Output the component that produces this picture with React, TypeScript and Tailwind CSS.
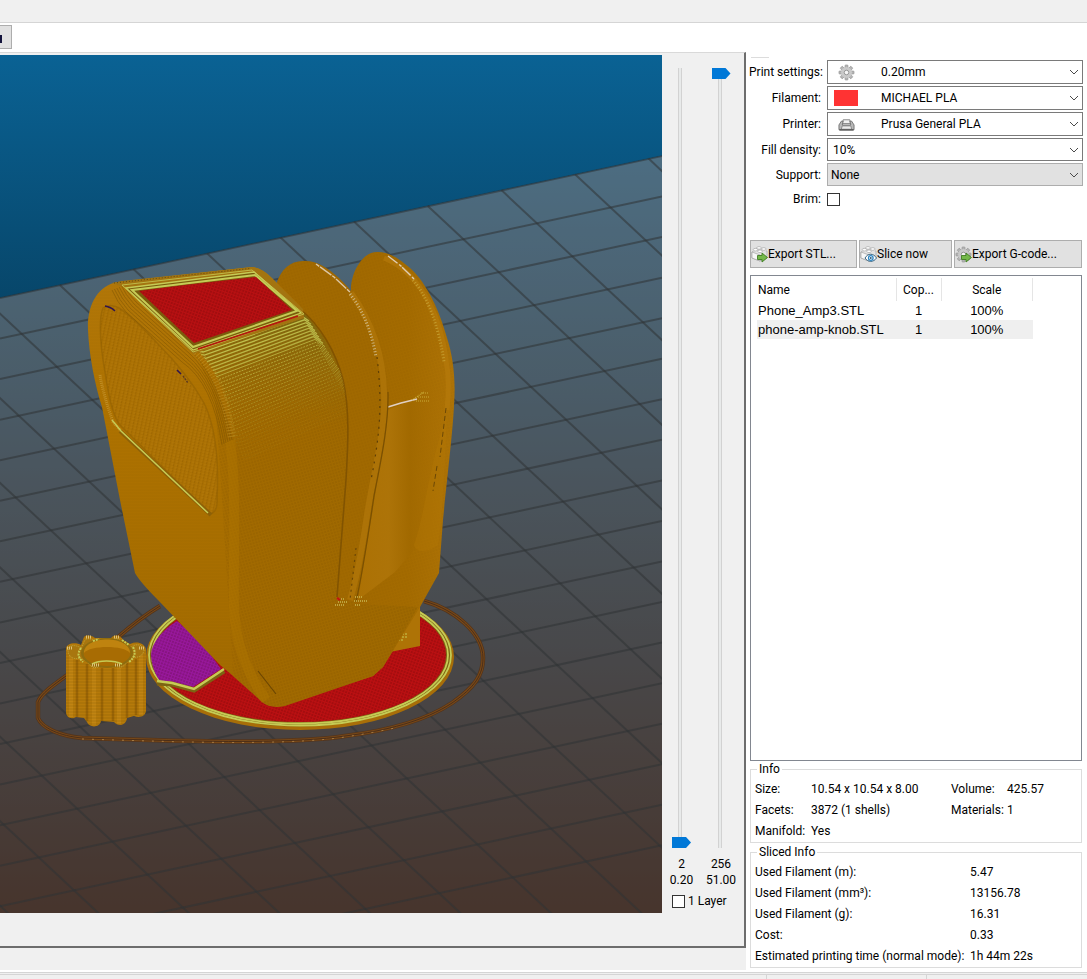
import { useState } from "react";
import type { ReactNode } from "react";

const LIME = "#c6cb55";

const rowLines = Array.from({ length: 18 }, (_, i) => i);
const columnLines = Array.from({ length: 28 }, (_, i) => i - 24);
const ribs = Array.from({ length: 34 }, (_, i) => i);
const shoulderLines = Array.from({ length: 6 }, (_, i) => i);

const slicedInfo = [
  { label: "Used Filament (m):", value: "5.47" },
  { label: "Used Filament (mm³):", value: "13156.78" },
  { label: "Used Filament (g):", value: "16.31" },
  { label: "Cost:", value: "0.33" },
  { label: "Estimated printing time (normal mode):", value: "1h 44m 22s" },
];

const objects = [
  { name: "Phone_Amp3.STL", copies: 1, scale: "100%" },
  { name: "phone-amp-knob.STL", copies: 1, scale: "100%" },
];

function Chevron() {
  return (
    <svg viewBox="0 0 10 6" className="pointer-events-none absolute right-1 top-1/2 w-[10px] -translate-y-1/2" fill="none" stroke="#4a4a4a">
      <path d="M1 1l4 4 4-4" />
    </svg>
  );
}

function GearIcon({ className = "" }: { className?: string }) {
  return (
    <svg viewBox="0 0 18 18" className={className}>
      <g fill="#b4b4b4" stroke="#8d8d8d" strokeWidth=".6">
        {[0, 45, 90, 135].map((a) => (
          <rect key={a} x="7.4" y="1" width="3.2" height="16" rx=".8" transform={`rotate(${a} 9 9)`} />
        ))}
      </g>
      <circle cx="9" cy="9" r="5.8" fill="#c9c9c9" />
      <circle cx="9" cy="9" r="2.4" fill="#f6f6f6" stroke="#8a8a8a" strokeWidth=".9" />
    </svg>
  );
}

function PrinterIcon({ className = "" }: { className?: string }) {
  return (
    <svg viewBox="0 0 18 18" className={className}>
      <path d="M5.500 4h7l1 4h-9z" fill="#f1f1f1" stroke="#777" strokeWidth=".9" />
      <path d="M3.500 5.500h2l-1 4h9l-1-4h2l2.500 4v5H1v-5z" fill="#b9b9b9" stroke="#6a6a6a" strokeWidth=".9" />
      <path d="M4.500 10.500h9l1 3.500h-11z" fill="#ececec" stroke="#777" strokeWidth=".8" />
      <path d="M1.500 14h15v1.500h-15z" fill="#555" />
    </svg>
  );
}

function GreenArrow() {
  return <path d="M6.500 9.500h4.500V7L16.500 11.500 11 16v-2.500H6.500z" fill="#74b84a" stroke="#3f7d22" strokeWidth=".9" strokeLinejoin="round" />;
}

function Brick() {
  return (
    <g stroke="#999" strokeWidth=".6">
      <path d="M1 6l7-3 8 2v7l-7 3-8-3z" fill="#e2e2e2" />
      <path d="M1 6l8 3v6l-8-3z" fill="#f7f7f7" />
      <path d="M2.200 3.500h4.600v2H2.200zM6.700 5h4.600v2H6.700zM10.500 2.700h4.600v2h-4.600zM5.700 1.500h4.600v2H5.700z" fill="#efefef" stroke="none" />
      <ellipse cx="4.500" cy="3.700" rx="2.300" ry="1.300" fill="#fff" />
      <ellipse cx="8" cy="1.900" rx="2.300" ry="1.300" fill="#fff" />
      <ellipse cx="12.800" cy="3" rx="2.300" ry="1.300" fill="#fff" />
      <ellipse cx="9" cy="5.300" rx="2.300" ry="1.300" fill="#fff" />
    </g>
  );
}

function ExportStlIcon() {
  return (
    <svg viewBox="0 0 17 17" className="size-[17px] shrink-0">
      <Brick />
      <GreenArrow />
    </svg>
  );
}

function SliceIcon() {
  return (
    <svg viewBox="0 0 17 17" className="size-[17px] shrink-0">
      <Brick />
      <path d="M5 12c3-5 8.500-5 11.500 0-3 4.500-8.500 4.500-11.500 0z" fill="#fff" stroke="#33617f" />
      <circle cx="10.800" cy="12" r="2.300" fill="#fff" stroke="#2b86c4" strokeWidth="1.300" />
      <circle cx="10.800" cy="12" r=".9" fill="#1e4f74" />
    </svg>
  );
}

function ExportGcodeIcon() {
  return (
    <span className="relative block size-[17px] shrink-0">
      <GearIcon className="size-[17px]" />
      <svg viewBox="0 0 17 17" className="absolute inset-0 size-[17px]">
        <GreenArrow />
      </svg>
    </span>
  );
}

function Bed() {
  return (
    <g>
      <rect x="0" y="55" width="662" height="858" fill="url(#sky)" />
      <path d="M0 298L662 156V913H0z" fill="#cc9980" opacity=".35" />
      <g clipPath="url(#bedClip)" stroke="#2f3335" strokeOpacity=".55" strokeWidth="2">
        {rowLines.map((i) => (
          <line key={i} x1="0" y1={298 + i * 40.55} x2="662" y2={156 + i * 40.55} />
        ))}
        {columnLines.map((i) => (
          <line
            key={i}
            x1={575 + i * 73.6}
            y1={174.3 - i * 15.8}
            x2={575 + i * 73.6 + 35.2 * 26}
            y2={174.3 - i * 15.8 + 32.9 * 26}
          />
        ))}
      </g>
    </g>
  );
}

function Skirt() {
  const d =
    "M160 606C145 615 131 626 117 638L66 676C52 686 41 694 38 702V718C42 728 60 736 82 738L150 740C215 742 300 743 345 736C385 731 425 721 452 703C475 687 483 675 483 658C483 634 456 610 424 601";
  return (
    <g fill="none">
      <path d={d} stroke="#54341b" strokeWidth="4.500" />
      <path d={d} stroke="#774818" strokeWidth="3" />
      <path d={d} stroke="#4b2e18" strokeWidth="1" />
      <path d="M82 739L150 741C215 743 300 744 345 737C365 734 380 731 395 728" stroke="#a57a42" strokeWidth="1" strokeDasharray="2 8" />
    </g>
  );
}

const purplePatch = "M177 621C158 633 151 646 151 656C152 666 155 675 160 681L193 687L221 669L200 640z";

function Disc() {
  return (
    <g>
      <ellipse cx="300" cy="657" rx="154" ry="73" fill="#a86e08" />
      <ellipse cx="300" cy="655" rx="152" ry="71.500" fill="#7c6412" />
      <ellipse cx="300" cy="655" rx="151" ry="70.500" fill="none" stroke={LIME} strokeWidth="1.800" />
      <ellipse cx="300" cy="655" rx="148" ry="68.500" fill="none" stroke={LIME} strokeWidth="1.800" />
      <ellipse cx="300" cy="655" rx="146" ry="67" fill="#bb1012" />
      <ellipse cx="300" cy="655" rx="146" ry="67" fill="url(#weave)" />
      <path d={purplePatch} fill="#98189c" />
      <path d={purplePatch} fill="url(#weave)" />
      <path d="M157 683L172 684L194 690L224 671" fill="none" stroke="#7c6412" strokeWidth="5" />
      <path d="M157 681L172 683L194 689L224 669" fill="none" stroke={LIME} strokeWidth="2.500" />
    </g>
  );
}

const knobShape =
  "M66 649C66 643 76 642 81 645L84 637C87 634 93 636 95 638H111C114 634 121 635 123 640L130 644C137 641 144 643 146 649V711C145 717 139 718 134 716L127 718C126 726 118 727 114 722L101 721C100 728 89 728 87 722L84 718L76 717C71 720 66 717 66 712z";

function Knob() {
  return (
    <g>
      <path d={knobShape} fill="#b67a0a" />
      <path d="M77 660V717M87 664V721M102 668V721M113 668V721M127 663V718M136 659V715" stroke="#8a5804" strokeWidth="2.500" opacity=".6" />
      <path d="M71 654V717M94 668V725M119 668V724M141 654V715" stroke="#c98b18" strokeWidth="4" opacity=".6" />
      <path d={knobShape} fill="url(#layers)" />
      <path
        d="M68 650C68 644 77 645 81 648L85 640C88 637 93 640 95 641H111C115 637 120 639 122 643L131 647C137 643 143 645 144 650C143 656 138 658 133 657L127 661C125 668 117 669 113 664H101C98 669 91 669 88 662L80 658C74 660 68 657 68 650z"
        fill="#a8760f"
        stroke="#bfa63a"
        strokeWidth="1"
        strokeDasharray="1 1"
      />
      <ellipse cx="107" cy="653" rx="26" ry="15" fill="#8f6c0e" />
      <ellipse cx="107" cy="653" rx="23.500" ry="13" fill="#a86c03" />
      <path d="M84 653C84 635 130 635 130 653C124 645 90 645 84 653z" fill="#bf830f" />
      <path d="M92 664C99 660 114 660 122 664" fill="none" stroke={LIME} strokeWidth="1.600" />
      <path d="M81 648C77 654 78 657 83 662M133 647C136 653 135 657 129 662M93 641L99 639M122 640L129 645" fill="none" stroke={LIME} strokeWidth="2" strokeDasharray="2 1" />
      <path d="M86 637h6M114 637h6M67 648h6M139 648h6M92 665h7M115 665h6" stroke="#dcc27a" strokeWidth="3" strokeDasharray="1 1" />
    </g>
  );
}

function Phone() {
  const rear =
    "M351 292C350 274 362 251 378 252C388 252 397 257 410 268C427 283 440 312 447 338C453 356 456 380 454 405C453 430 447 480 443 520L439 573L420 607L383 667L373 676L330 690L300 600L340 500z";
  const fin =
    "M277 282C281 270 290 261 303 261C316 260 327 267 339 278C352 290 362 305 370 321C380 340 387 365 388 392C389 425 380 465 374 496C369 530 362 575 356 602L330 620L290 400z";
  const front =
    "M193 346L300 310C318 325 334 350 342 378C349 410 348 445 346 480L337 597L358 604L400 606L418 607L383 667L373 676L285 706Q270 709 262 702L233 676L222 500L215 400z";
  const left =
    "M88 330C87 305 98 285 118 282L252 267Q262 268 272 278L300 306L193 348C212 366 226 388 232 425C240 470 243 600 238 680L220 665L158 600Q140 582 135 573L120 500L102 407C95 385 89 355 88 330z";
  const windowPath =
    "M103 308C98 320 101 350 105 372C109 398 112 412 119 424L210 514Q218 512 217 498C219 460 216 428 204 403C194 385 176 362 158 344C144 329 130 315 119 308Q110 303 103 308z";
  return (
    <g>
      <path d="M385 600L420 596V646L390 652z" fill="#ae7306" />
      <path d="M399 637h8M402 634h6M398 640h6" stroke={LIME} strokeWidth="1" strokeDasharray="2 1" />

      <path d={rear} fill="url(#rearFill)" />
      <path d={rear} fill="url(#dots)" opacity=".3" />
      <path d="M387 410C405 404 420 398 430 384L445 400L440 520L414 550L395 572L358 600L376 490z" fill="url(#pillarFill)" />
      <path d="M447 415C445 470 442 520 438 545C430 552 416 554 414 545C426 510 430 460 447 415z" fill="#b47907" opacity=".35" />
      <path d="M384 258C425 275 442 325 446 360C450 380 448 400 447 410" fill="none" stroke="#b87c0c" strokeWidth="5" opacity=".6" />
      <path d="M413 280C430 300 439 330 444 362" fill="none" stroke="#c8a436" strokeWidth="3" strokeDasharray="1 2" opacity=".8" />
      <path d="M388 256L401 266L414 279" fill="none" stroke="#e0cdb4" strokeWidth="1.400" strokeDasharray="12 2 3 1" />
      <path d="M388 407L401 403L417 399" fill="none" stroke="#e0d0c4" strokeWidth="1.600" />
      <path d="M412 400L424 392M416 401H430M418 397H430M421 393H429" stroke="#c9ac38" strokeWidth="1.200" strokeDasharray="1 1" />
      <path d="M446 408L440 457M437 466L433 491" stroke="#6c4805" strokeWidth="1" strokeDasharray="5 3" />

      <path d={fin} fill="#a16900" />
      <path d={fin} fill="url(#dots)" opacity=".35" />
      <path d="M351 293C369 318 383 350 384 392C386 428 374 470 367 515C362 550 356 580 350 600" fill="none" stroke="#b2770a" strokeWidth="6" opacity=".7" />
      <path d="M388 392C389 425 380 465 374 496C369 530 362 575 356 602" fill="none" stroke="#7a5002" strokeWidth="1.200" />
      <path d="M316 264L334 277L350 292" fill="none" stroke="#dcc6a4" strokeWidth="1.400" strokeDasharray="4 1 14 1" />
      <path d="M350 294C365 313 372 335 376 357" fill="none" stroke="#cdb680" strokeWidth="3" strokeDasharray="1 2" />
      <path d="M377 357C382 400 381 430 371 480" fill="none" stroke="#5f3f06" strokeWidth="1.200" strokeDasharray="2 5" />
      <path d="M356 548L350 600" stroke="#6c4705" strokeWidth="1.200" strokeDasharray="2 4" />

      <path d={left} fill="url(#leftFill)" />
      <path d={left} fill="url(#layers)" opacity=".2" />
      <path d={front} fill="url(#frontFill)" />
      <path d="M193 346L300 310C318 325 334 350 342 378L348 420L234 440C231 405 219 370 193 346z" fill="url(#ribFill)" />
      <path d={front} fill="url(#dots)" opacity=".7" />
      <path d="M300 309C320 325 336 352 343 380C350 410 348 445 346 480L337 597" fill="none" stroke="#7a4f00" strokeWidth="1.600" opacity=".8" />
      <path d="M230 440C237 490 233 560 234 610Q237 660 266 700" fill="none" stroke="#b27700" strokeWidth="10" opacity=".4" />
      <path d="M258 671L276 694" stroke="#6c4600" strokeWidth="1.200" />

      <g fill="none" stroke={LIME} clipPath="url(#frontClip)">
        {ribs.map((i) => (
          <path
            key={i}
            d={`M${194 + i * 1.5} ${350 + i * 3.3}L${203 + i * 1.4} ${352 + i * 3.2}L${303 + i * 1.5} ${317 + i * 2.8}L${309 + i * 2} ${321 + i * 3.2}`}
            strokeWidth={i < 8 ? 1.3 : 1}
            strokeOpacity={Math.max(0.08, 0.9 - i * 0.028)}
            strokeDasharray={i < 9 ? undefined : "2 1"}
          />
        ))}
      </g>

      <path d={windowPath} fill="#aa7003" />
      <path d={windowPath} fill="url(#mesh)" />
      <path d={windowPath} fill="none" stroke="#8d5d02" strokeWidth="1.500" opacity=".5" />
      <path d="M100 375C102 388 107 405 113 422L121 431" fill="none" stroke="#c99a34" strokeWidth="3" strokeDasharray="1 1" opacity=".7" />
      <path d="M120 431L211 515" stroke="#8d6107" strokeWidth="4" />
      <path d="M112 420L121 431L208 513" fill="none" stroke={LIME} strokeWidth="1.500" />
      <path d="M105 306Q111 307 115 311M177 370L181 374" fill="none" stroke="#30144e" strokeWidth="1.600" />
      <path d="M183 376L188 383" stroke="#5e3a20" strokeWidth="1.400" strokeDasharray="2 1" />

      <g fill="none" stroke="#7a5203" strokeWidth=".8" opacity=".6">
        {shoulderLines.map((i) => (
          <path
            key={i}
            d={`M${124 - i * 2.4} ${285 + i}Q${127 - i * 2} ${292 + i * 2} ${136 - i * 2} ${302 + i * 2}L${192 - i * 2} ${352 + i * 2}Q${218 - i} ${378 + i} ${232 - i * 2} ${440 + i}`}
          />
        ))}
      </g>
      <path d="M196 352C213 368 225 392 232 438" fill="none" stroke="#c79a2c" strokeWidth="8" strokeDasharray="1 2" opacity=".5" />

      <path d="M112 283L122 281L252 267Q261 268 269 276L303 309L304 318L193 354L126 288z" fill="#a37410" />
      <path d="M114 283L250 268.500" stroke="#5f4a10" strokeWidth="1" strokeDasharray="1 2" />
      <path d="M122 285L252 270L304 314L193 352z" fill="none" stroke={LIME} strokeWidth="1" opacity=".8" />
      <path d="M126 288L254 272L301 313L193 350z" fill="#7a5c0c" stroke={LIME} strokeWidth="1.300" />
      <path d="M132 290L255 275L297 311L193 347z" fill="none" stroke={LIME} strokeWidth="2" />
      <path d="M139 291L185 285L256 277L292 310L194 343z" fill="#b81012" />
      <path d="M139 291L185 285L256 277L292 310L194 343z" fill="url(#weave)" />
      <path d="M198 349L298 316" stroke="#b3170d" strokeWidth="1.800" />

      <path d="M337 599h8M338 602h10M335 605h9M355 597h8M354 601h13M355 605h5" stroke="#c9b750" strokeWidth="1.500" strokeDasharray="1 1" />
      <path d="M337 598l3 2" stroke="#c0180f" strokeWidth="2.500" />
    </g>
  );
}

function Preview() {
  return (
    <svg
      role="img"
      aria-label="Toolpath preview"
      viewBox="0 55 662 858"
      preserveAspectRatio="xMinYMin slice"
      className="block min-w-0 flex-1"
    >
      <defs>
        <linearGradient id="sky" x1="0" y1="0" x2="0" y2="1">
          <stop offset="0" stopColor="#0a6294" />
          <stop offset="1" stopColor="#000000" />
        </linearGradient>
        <linearGradient id="leftFill" x1="0" y1="0" x2="0" y2="1">
          <stop offset="0" stopColor="#b27709" />
          <stop offset=".35" stopColor="#ae7200" />
          <stop offset="1" stopColor="#a36b00" />
        </linearGradient>
        <linearGradient id="frontFill" x1="0" y1="0" x2="1" y2="0">
          <stop offset="0" stopColor="#b07400" />
          <stop offset=".2" stopColor="#a26a00" />
          <stop offset="1" stopColor="#9f6900" />
        </linearGradient>
        <linearGradient id="rearFill" x1="0" y1="0" x2="1" y2="0">
          <stop offset="0" stopColor="#9f6700" />
          <stop offset=".7" stopColor="#a46b00" />
          <stop offset="1" stopColor="#ae7306" />
        </linearGradient>
        <linearGradient id="pillarFill" x1="0" y1="0" x2="1" y2="0">
          <stop offset="0" stopColor="#ac7104" />
          <stop offset=".35" stopColor="#b0760a" stopOpacity=".8" />
          <stop offset=".6" stopColor="#a16900" stopOpacity=".8" />
          <stop offset="1" stopColor="#ac7104" stopOpacity=".3" />
        </linearGradient>
        <linearGradient id="ribFill" x1="0" y1="0" x2="0" y2="1">
          <stop offset="0" stopColor="#7d6a12" />
          <stop offset="1" stopColor="#a06902" stopOpacity="0" />
        </linearGradient>
        <pattern id="weave" width="3" height="3" patternUnits="userSpaceOnUse" patternTransform="rotate(20)">
          <path d="M0 1h2" stroke="#3a0000" strokeOpacity=".35" />
        </pattern>
        <pattern id="dots" width="3" height="3" patternUnits="userSpaceOnUse" patternTransform="rotate(-16)">
          <path d="M0 1h2" stroke="#4d3100" strokeOpacity=".25" />
        </pattern>
        <pattern id="layers" width="3" height="3" patternUnits="userSpaceOnUse">
          <path d="M0 1h3" stroke="#5d3b00" strokeOpacity=".22" />
        </pattern>
        <pattern id="mesh" width="4" height="3" patternUnits="userSpaceOnUse" patternTransform="rotate(12)">
          <path d="M0 1h2" stroke="#cc9220" strokeOpacity=".28" />
          <path d="M2 2h1" stroke="#5c3a00" strokeOpacity=".28" />
        </pattern>
        <clipPath id="bedClip">
          <path d="M0 297L662 155V913H0z" />
        </clipPath>
        <clipPath id="frontClip">
          <path d="M193 346L303 311C320 325 336 352 343 380C350 410 348 445 346 480L235 470C233 405 219 370 193 346z" />
        </clipPath>
      </defs>
      <Bed />
      <Skirt />
      <Disc />
      <Knob />
      <Phone />
    </svg>
  );
}

function LayerSlider({ label, value, onChange }: { label: string; value: number; onChange: (value: number) => void }) {
  return (
    <input
      type="range"
      aria-label={label}
      min={2}
      max={256}
      value={value}
      onChange={(e) => onChange(Number(e.target.value))}
      className="min-h-0 w-[19px] flex-1 appearance-none bg-[linear-gradient(90deg,#d2d2d2_1px,#e8eaea_1px,#e8eaea_3px,#d2d2d2_3px)] bg-[length:4px_100%] bg-[position:6px_0] bg-no-repeat [direction:rtl] [writing-mode:vertical-lr] [&::-webkit-slider-thumb]:h-[11px] [&::-webkit-slider-thumb]:w-[19px] [&::-webkit-slider-thumb]:appearance-none [&::-webkit-slider-thumb]:bg-[#0078d7] [&::-webkit-slider-thumb]:[clip-path:polygon(0_0,14px_0,100%_50%,14px_100%,0_100%)]"
    />
  );
}

function LayerControls() {
  const [low, setLow] = useState(2);
  const [high, setHigh] = useState(256);

  return (
    <div className="flex w-[82px] shrink-0 flex-col pb-[3px] pt-[13px]">
      <div className="flex min-h-0 flex-1">
        <div className="flex w-[39px] flex-col items-center text-center">
          <LayerSlider label="Lower layer" value={low} onChange={setLow} />
          <output className="mt-2 leading-4">{low}</output>
          <output className="leading-4">{(low * 0.1).toFixed(2)}</output>
        </div>
        <div className="flex w-10 flex-col items-center text-center">
          <LayerSlider label="Upper layer" value={high} onChange={setHigh} />
          <output className="mt-2 leading-4">{high}</output>
          <output className="leading-4">51.00</output>
        </div>
      </div>
      <label className="ml-[10px] mt-1 flex items-center gap-[3px] whitespace-nowrap leading-[18px]">
        <input type="checkbox" className="size-[13px] appearance-none border border-[#333] bg-white checked:bg-[#0078d7]" />
        1 Layer
      </label>
    </div>
  );
}

interface SettingProps {
  id: string;
  label: string;
  value: string;
  icon?: ReactNode;
  className: string;
}

function Setting({ id, label, value, icon, className }: SettingProps) {
  return (
    <>
      <label htmlFor={id} className="whitespace-nowrap text-right">
        {label}
      </label>
      <div className="relative">
        <select id={id} className={`block w-full appearance-none border pr-5 text-black ${className}`}>
          <option>{value}</option>
        </select>
        {icon && <span className="pointer-events-none absolute inset-y-0 left-[7px] flex w-6 items-center justify-center">{icon}</span>}
        <Chevron />
      </div>
    </>
  );
}

function SettingsForm() {
  return (
    <div className="grid grid-cols-[72px_1fr] items-center gap-x-[6px] gap-y-[2px] pl-[2px]">
      <Setting id="print" label="Print settings:" value="0.20mm" icon={<GearIcon className="size-[17px]" />} className="h-6 border-[#7a7a7a] bg-white pl-[53px]" />
      <Setting
        id="filament"
        label="Filament:"
        value="MICHAEL PLA"
        icon={<span className="h-4 w-6 bg-[#ff3333]" />}
        className="h-6 border-[#7a7a7a] bg-white pl-[53px]"
      />
      <Setting id="printer" label="Printer:" value="Prusa General PLA" icon={<PrinterIcon className="size-[17px]" />} className="h-6 border-[#7a7a7a] bg-white pl-[53px]" />
      <Setting id="density" label="Fill density:" value="10%" className="h-[23px] border-[#7a7a7a] bg-white pl-[5px]" />
      <Setting id="support" label="Support:" value="None" className="h-[23px] border-[#adadad] bg-[#e1e1e1] pl-[3px]" />
      <label htmlFor="brim" className="text-right leading-[22px]">
        Brim:
      </label>
      <input id="brim" type="checkbox" className="size-[13px] appearance-none border border-[#333] bg-white checked:bg-[#0078d7]" />
    </div>
  );
}

function ObjectList() {
  return (
    <div className="mt-[7px] flex-1 border border-[#828790] bg-white pl-[6px] pt-[2px]">
      <table className="w-[276px] table-fixed border-collapse">
        <thead>
          <tr className="h-[23px]">
            <th className="w-[139px] border-r border-[#e5e5e5] pl-px text-left font-normal">Name</th>
            <th className="w-[45px] border-r border-[#e5e5e5] text-center font-normal">Cop...</th>
            <th className="border-r border-[#e5e5e5] text-center font-normal">Scale</th>
          </tr>
        </thead>
        <tbody className="font-['Liberation_Sans',Arial,sans-serif] text-[13px] leading-[19px]">
          {objects.map((object, idx) => (
            <tr key={object.name} className={idx === 1 ? "bg-[#efefef]" : ""}>
              <td className="whitespace-nowrap pl-px">{object.name}</td>
              <td className="text-center">{object.copies}</td>
              <td className="text-center">{object.scale}</td>
            </tr>
          ))}
        </tbody>
      </table>
    </div>
  );
}

function Group({ title, children }: { title: string; children: ReactNode }) {
  return (
    <fieldset className="mb-px border border-[#dcdcdc] px-1 pt-px leading-[21px]">
      <legend className="ml-[2px] px-[2px] leading-[17px]">{title}</legend>
      {children}
    </fieldset>
  );
}

export default function App() {
  const buttonClass = "flex h-7 items-center border border-[#adadad] bg-[#e1e1e1] whitespace-nowrap hover:bg-[#e5f1fb]";

  return (
    <div className="flex min-h-screen flex-col overflow-hidden bg-white font-[Roboto,'Open_Sans',sans-serif] text-[12px] text-black">
      <header className="h-[23px] border-b border-[#d5d5d5] bg-[#f0f0f0]" />
      <div className="flex h-[29px] items-start pt-[2px]">
        <button aria-label="Preview tab" className="flex h-6 w-3 items-center border border-l-0 border-[#adadad] bg-[#e1e1e1]">
          <span className="mt-1 h-2 w-[2px] bg-[#14143c]" />
        </button>
      </div>

      <main className="flex flex-1">
        <section className="flex min-w-0 flex-1 flex-col bg-[#f0f0f0]">
          <div className="flex flex-1 border-b-2 border-r-2 border-t border-b-[#6d6d6d] border-r-[#6d6d6d] border-t-[#d9d9d9] pb-[33px] pt-[2px]">
            <Preview />
            <LayerControls />
          </div>
          <div className="h-6 border-b-2 border-white" />
        </section>

        <aside className="flex w-[341px] shrink-0 flex-col pl-px pr-1 pt-[5px]">
          <div className="mb-[2px] ml-1 h-px w-[18px] bg-[#dcdcdc]" />
          <SettingsForm />
          <div className="mt-[30px] flex gap-[2px] pl-[3px] pr-px">
            <button className={`${buttonClass} w-[107px]`}>
              <ExportStlIcon />
              Export STL...
            </button>
            <button className={`${buttonClass} w-[93px]`}>
              <SliceIcon />
              Slice now
            </button>
            <button className={`${buttonClass} flex-1`}>
              <ExportGcodeIcon />
              Export G-code...
            </button>
          </div>
          <div className="flex flex-1 flex-col pl-[3px] pr-px">
            <ObjectList />
            <Group title="Info">
              <dl className="grid grid-cols-[56px_140px_56px_1fr] whitespace-nowrap">
                <dt>Size:</dt>
                <dd>10.54 x 10.54 x 8.00</dd>
                <dt>Volume:</dt>
                <dd>425.57</dd>
                <dt>Facets:</dt>
                <dd>3872 (1 shells)</dd>
                <dt>Materials:</dt>
                <dd>1</dd>
                <dt>Manifold:</dt>
                <dd>Yes</dd>
              </dl>
            </Group>
            <Group title="Sliced Info">
              <dl className="grid grid-cols-[215px_1fr] whitespace-nowrap">
                {slicedInfo.map((row) => (
                  <div key={row.label} className="contents">
                    <dt>{row.label}</dt>
                    <dd>{row.value}</dd>
                  </div>
                ))}
              </dl>
            </Group>
          </div>
          <div className="h-[3px]" />
        </aside>
      </main>

      <footer className="flex h-[7px] border-t border-[#d5d5d5] bg-[#f0f0f0] pt-px">
        <div className="flex-1 border-r border-t border-[#d5d5d5]" />
        <div className="w-[160px] border-r border-t border-[#d5d5d5]" />
        <div className="w-[160px] border-t border-[#d5d5d5]" />
      </footer>
    </div>
  );
}
